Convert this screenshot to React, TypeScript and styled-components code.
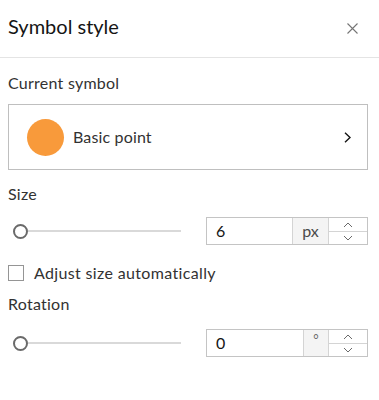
import React from "react";
import styled, { createGlobalStyle } from "styled-components";

const GlobalStyle = createGlobalStyle`
  html, body {
    margin: 0;
    padding: 0;
    background: #ffffff;
  }
  body {
    font-family: Lato, "Noto Sans", sans-serif;
    -webkit-font-smoothing: antialiased;
  }
`;

const Panel = styled.div`
  width: 379px;
  display: flex;
  flex-direction: column;
  background: #ffffff;
`;

const Header = styled.div`
  height: 58px;
  box-sizing: border-box;
  border-bottom: 1px solid #e4e4e4;
  display: flex;
  justify-content: space-between;
  align-items: flex-start;
  padding: 14px 21px 0 8px;
`;

const Title = styled.h1`
  margin: 0;
  font-size: 20px;
  line-height: 24px;
  font-weight: 400;
  color: #151515;
`;

const CloseButton = styled.button`
  margin-top: 9px;
  padding: 0;
  border: 0;
  background: transparent;
  width: 11px;
  height: 11px;
  display: flex;
  color: #757575;
  cursor: pointer;
`;

const Body = styled.div`
  padding: 15px 11px 0 8px;
  display: flex;
  flex-direction: column;
`;

const Label = styled.div<{ $mt?: number }>`
  margin-top: ${(p) => p.$mt ?? 0}px;
  font-size: 16px;
  line-height: 20px;
  letter-spacing: 0.25px;
  color: #323232;
`;

const SymbolCard = styled.div`
  margin-top: 11px;
  height: 66px;
  box-sizing: border-box;
  border: 1px solid #bfbfbf;
  display: flex;
  align-items: center;
  padding: 0 16px 0 18px;
`;

const Swatch = styled.div`
  width: 37px;
  height: 37px;
  border-radius: 50%;
  background: #f89a3b;
  flex: none;
`;

const SymbolName = styled.div`
  margin-left: 9px;
  flex: 1;
  font-size: 16px;
  line-height: 20px;
  letter-spacing: 0.15px;
  color: #323232;
`;

const ControlRow = styled.div<{ $mt: number }>`
  margin-top: ${(p) => p.$mt}px;
  display: flex;
  align-items: center;
  gap: 25px;
`;

const Slider = styled.div`
  flex: 1;
  display: flex;
  align-items: center;
  padding-left: 5px;
  height: 28px;
`;

const Thumb = styled.div`
  width: 15px;
  height: 15px;
  box-sizing: border-box;
  border-radius: 50%;
  border: 2px solid #6a6a6a;
  background: #ffffff;
  flex: none;
`;

const Track = styled.div`
  flex: 1;
  height: 2px;
  background: #d9d9d9;
`;

const NumberField = styled.div`
  width: 162px;
  height: 28px;
  box-sizing: border-box;
  border: 1px solid #c4c4c4;
  display: flex;
`;

const ValueText = styled.div`
  flex: 1;
  padding-left: 9px;
  font-size: 16px;
  line-height: 26px;
  color: #151515;
`;

const Suffix = styled.div<{ $w: number }>`
  width: ${(p) => p.$w}px;
  box-sizing: border-box;
  border-left: 1px solid #d4d4d4;
  background: #f4f4f4;
  color: #4a4a4a;
  font-size: 16px;
  line-height: 24px;
  display: flex;
  justify-content: center;
  align-items: center;
`;

const Degree = styled.span`
  font-size: 13px;
  line-height: 13px;
  margin-top: -7px;
  color: #6a6a6a;
`;

const Spinner = styled.div`
  width: 39px;
  box-sizing: border-box;
  border-left: 1px solid #d4d4d4;
  display: flex;
  flex-direction: column;
`;

const SpinButton = styled.div<{ $top?: boolean }>`
  height: ${(p) => (p.$top ? 14 : 12)}px;
  box-sizing: border-box;
  border-bottom: ${(p) => (p.$top ? "1px solid #d4d4d4" : "0")};
  display: flex;
  align-items: center;
  justify-content: center;
  color: #6a6a6a;
`;

const CheckRow = styled.label`
  margin-top: 18px;
  display: flex;
  align-items: center;
  font-size: 16px;
  line-height: 20px;
  letter-spacing: 0.35px;
  color: #323232;
`;

const Box = styled.span`
  width: 16px;
  height: 16px;
  box-sizing: border-box;
  border: 1px solid #959595;
  background: #ffffff;
  margin-right: 10px;
  flex: none;
`;

const Up = () => (
  <svg width="10" height="6" viewBox="0 0 10 6" fill="none">
    <path d="M1 5 L5 1 L9 5" stroke="currentColor" strokeWidth="1" />
  </svg>
);

const Down = () => (
  <svg width="10" height="6" viewBox="0 0 10 6" fill="none">
    <path d="M1 1 L5 5 L9 1" stroke="currentColor" strokeWidth="1" />
  </svg>
);

const Stepper: React.FC<{ value: string; suffix: React.ReactNode; w: number }> = ({
  value,
  suffix,
  w,
}) => (
  <NumberField>
    <ValueText>{value}</ValueText>
    <Suffix $w={w}>{suffix}</Suffix>
    <Spinner>
      <SpinButton $top>
        <Up />
      </SpinButton>
      <SpinButton>
        <Down />
      </SpinButton>
    </Spinner>
  </NumberField>
);

const SliderControl = () => (
  <Slider>
    <Thumb />
    <Track />
  </Slider>
);

export default function App() {
  return (
    <>
      <GlobalStyle />
      <Panel>
        <Header>
          <Title>Symbol style</Title>
          <CloseButton aria-label="Close">
            <svg width="11" height="11" viewBox="0 0 11 11" fill="none">
              <path d="M0.5 0.5 L10.5 10.5 M10.5 0.5 L0.5 10.5" stroke="currentColor" strokeWidth="1.1" />
            </svg>
          </CloseButton>
        </Header>
        <Body>
          <Label>Current symbol</Label>
          <SymbolCard>
            <Swatch />
            <SymbolName>Basic point</SymbolName>
            <svg width="7" height="11" viewBox="0 0 7 11" fill="none">
              <path d="M1 0.8 L6 5.5 L1 10.2" stroke="#151515" strokeWidth="1.4" />
            </svg>
          </SymbolCard>
          <Label $mt={14}>Size</Label>
          <ControlRow $mt={13}>
            <SliderControl />
            <Stepper value="6" suffix="px" w={36} />
          </ControlRow>
          <CheckRow>
            <Box />
            Adjust size automatically
          </CheckRow>
          <Label $mt={11}>Rotation</Label>
          <ControlRow $mt={15}>
            <SliderControl />
            <Stepper value="0" suffix={<Degree>°</Degree>} w={25} />
          </ControlRow>
        </Body>
      </Panel>
    </>
  );
}
